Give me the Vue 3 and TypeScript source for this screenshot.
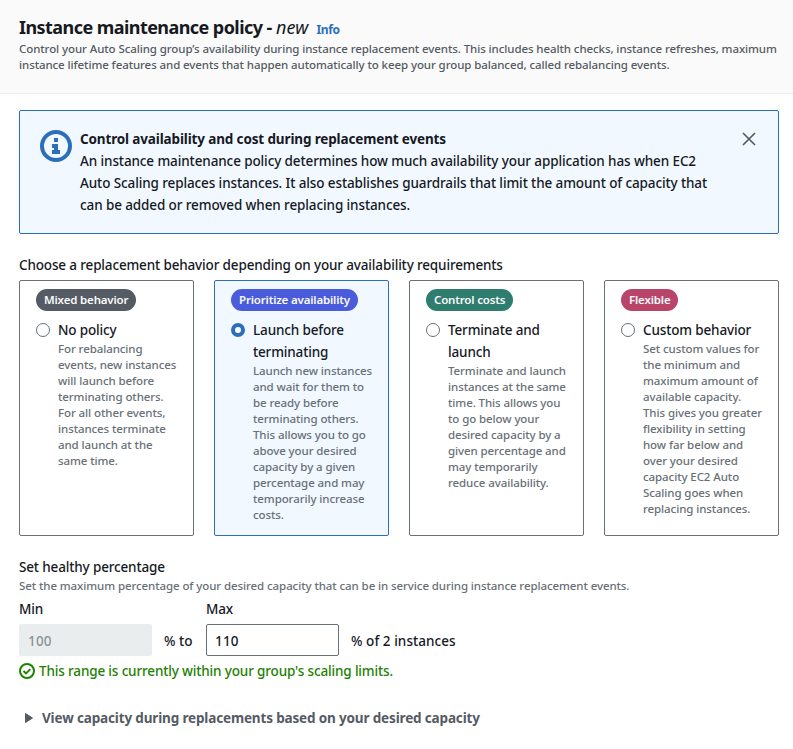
<script setup lang="ts">
import { ref } from 'vue'

interface Option {
  id: string
  badge: string
  tone: string
  label: string[]
  description: string[]
}

const options: Option[] = [
  {
    id: 'none',
    badge: 'Mixed behavior',
    tone: 'grey',
    label: ['No policy'],
    description: ['For rebalancing', 'events, new instances', 'will launch before', 'terminating others.', 'For all other events,', 'instances terminate', 'and launch at the', 'same time.'],
  },
  {
    id: 'launch-first',
    badge: 'Prioritize availability',
    tone: 'blue',
    label: ['Launch before', 'terminating'],
    description: ['Launch new instances', 'and wait for them to', 'be ready before', 'terminating others.', 'This allows you to go', 'above your desired', 'capacity by a given', 'percentage and may', 'temporarily increase', 'costs.'],
  },
  {
    id: 'terminate',
    badge: 'Control costs',
    tone: 'green',
    label: ['Terminate and', 'launch'],
    description: ['Terminate and launch', 'instances at the same', 'time. This allows you', 'to go below your', 'desired capacity by a', 'given percentage and', 'may temporarily', 'reduce availability.'],
  },
  {
    id: 'custom',
    badge: 'Flexible',
    tone: 'red',
    label: ['Custom behavior'],
    description: ['Set custom values for', 'the minimum and', 'maximum amount of', 'available capacity.', 'This gives you greater', 'flexibility in setting', 'how far below and', 'over your desired', 'capacity EC2 Auto', 'Scaling goes when', 'replacing instances.'],
  },
]

const selected = ref<string>('launch-first')
const min = ref<string>('100')
const max = ref<string>('110')
</script>

<template>
  <main class="panel">
    <header class="head">
      <div class="title-row">
        <h2 class="title">Instance maintenance policy - <em>new</em></h2>
        <a class="info">Info</a>
      </div>
      <p class="small head-text">
        <span class="line">Control your Auto Scaling group’s availability during instance replacement events. This includes health checks, instance refreshes, maximum</span>
        <span class="line second">instance lifetime features and events that happen automatically to keep your group balanced, called rebalancing events.</span>
      </p>
    </header>

    <div class="body">
      <section class="alert">
        <svg class="alert-icon" viewBox="0 0 32 32" width="32" height="32">
          <circle cx="16" cy="16" r="14" fill="none" stroke="#2b6fbb" stroke-width="4" />
          <path d="M14 8h4v4h-4zM12 14h6v6h2v4h-8v-4h2v-2h-2z" fill="#2b6fbb" />
        </svg>
        <div class="alert-text">
          <strong class="line alert-title">Control availability and cost during replacement events</strong>
          <span class="line">An instance maintenance policy determines how much availability your application has when EC2</span>
          <span class="line">Auto Scaling replaces instances. It also establishes guardrails that limit the amount of capacity that</span>
          <span class="line">can be added or removed when replacing instances.</span>
        </div>
        <svg class="close" viewBox="0 0 14 14" width="14" height="14">
          <path d="M1 1l12 12M13 1L1 13" fill="none" stroke="#545b64" stroke-width="1.7" />
        </svg>
      </section>

      <div class="group-label">Choose a replacement behavior depending on your availability requirements</div>
      <div class="cards">
        <label v-for="o in options" :key="o.id" class="card" :class="{ active: selected === o.id }" @click="selected = o.id">
          <span class="badge" :class="o.tone">{{ o.badge }}</span>
          <span class="choice">
            <span class="radio"></span>
            <span class="choice-text">
              <span v-for="l in o.label" :key="l" class="line choice-label">{{ l }}</span>
              <span class="small muted">
                <span v-for="d in o.description" :key="d" class="line">{{ d }}</span>
              </span>
            </span>
          </span>
        </label>
      </div>

      <div class="field-title">Set healthy percentage</div>
      <div class="small muted field-help">Set the maximum percentage of your desired capacity that can be in service during instance replacement events.</div>
      <div class="range">
        <div class="field">
          <span>Min</span>
          <input v-model="min" class="input" disabled />
        </div>
        <span class="unit to">% to</span>
        <div class="field">
          <span>Max</span>
          <input v-model="max" class="input" />
        </div>
        <span class="unit">% of 2 instances</span>
      </div>
      <div class="success">
        <svg viewBox="0 0 16 16" width="16" height="16">
          <circle cx="8" cy="8" r="7" fill="none" stroke="#1d8102" stroke-width="2" />
          <path d="M4.5 8l2.5 2.5 4.3-4.3" fill="none" stroke="#1d8102" stroke-width="1.9" />
        </svg>
        <span>This range is currently within your group's scaling limits.</span>
      </div>
      <div class="expander">
        <svg viewBox="0 0 8 10" width="8" height="10"><path d="M.5.5L7.5 5L.5 9.5z" fill="#545b64" stroke="#545b64" stroke-linejoin="round" /></svg>
        <span>View capacity during replacements based on your desired capacity</span>
      </div>
    </div>
  </main>
</template>

<style>
body {
  margin: 0;
  background: #fff;
}
</style>

<style scoped>
.panel {
  width: 793px;
  height: 749px;
  overflow: hidden;
  font: 500 13.5px/22px 'Noto Sans', sans-serif;
  letter-spacing: -0.15px;
  color: #16191f;
}
.panel * {
  box-sizing: border-box;
}
.line {
  display: block;
  white-space: nowrap;
}
.head {
  height: 94px;
  padding: 16px 0 0 19px;
  background: #fafafa;
  border-bottom: 1px solid #eaeded;
}
.title-row {
  display: flex;
  align-items: baseline;
  gap: 8px;
  height: 25px;
}
.title {
  margin: 0;
  font-size: 18px;
  line-height: 22px;
  font-weight: 700;
  letter-spacing: -0.56px;
  white-space: nowrap;
}
.title em {
  font-weight: 400;
  letter-spacing: 0.2px;
}
.info {
  font-size: 12px;
  font-weight: 700;
  color: #2b6fbb;
  letter-spacing: -0.4px;
}
.small {
  font-size: 11.5px;
  line-height: 16px;
  letter-spacing: -0.09px;
}
.head-text {
  margin: 0;
  color: #545b64;
}
.body {
  padding: 16px 14px 0 19px;
}
.alert {
  display: flex;
  height: 124px;
  padding: 17px 22px 17px 20px;
  background: #f1f8ff;
  border: 1px solid #2b6fbb;
  border-radius: 2px;
}
.alert-icon {
  margin-top: 2px;
  flex: none;
}
.alert-text {
  flex: 1;
  min-width: 0;
  margin-left: 8px;
  letter-spacing: -0.11px;
}
.alert-title {
  font-weight: 700;
  letter-spacing: -0.14px;
}
.close {
  flex: none;
  margin-top: 4px;
}
.group-label {
  margin-top: 20px;
}
.cards {
  display: grid;
  grid-template-columns: repeat(4, 175px);
  gap: 20px;
  height: 256px;
  margin-top: 4px;
}
.card {
  padding: 8px 0 0 16px;
  border: 1px solid #687078;
  border-radius: 2px;
}
.card.active {
  background: #f1f8ff;
  border-color: #2b6fbb;
}
.badge {
  display: block;
  width: max-content;
  height: 22px;
  padding: 0 8px;
  border-radius: 11px;
  font-size: 11.5px;
  font-weight: 600;
  letter-spacing: -0.17px;
  color: #fafafa;
}
.grey {
  background: #545b64;
}
.blue {
  background: #4a5cdb;
}
.green {
  background: #2f7d6f;
}
.red {
  background: #b9446a;
}
.choice {
  display: flex;
  gap: 8px;
  margin-top: 8px;
}
.radio {
  flex: none;
  width: 14px;
  height: 14px;
  margin-top: 4px;
  border: 1px solid #687078;
  border-radius: 50%;
  background: #fff;
}
.active .radio {
  border: 4px solid #2b6fbb;
}
.choice-text {
  display: block;
}
.muted {
  color: #687078;
}
.field-title {
  margin-top: 20px;
}
.field-help {
  white-space: nowrap;
}
.range {
  display: flex;
  align-items: flex-end;
  gap: 12px;
  margin-top: 4px;
}
.field {
  display: flex;
  flex-direction: column;
  gap: 4px;
  width: 133px;
}
.input {
  width: 100%;
  height: 32px;
  padding: 3px 8px 1px;
  border: 1px solid #687078;
  border-radius: 2px;
  background: #fff;
  color: #16191f;
  font: inherit;
  letter-spacing: 0.2px;
}
.input:disabled {
  border-color: #eaeded;
  background: #eaeded;
  color: #879596;
}
.unit {
  padding-bottom: 4px;
  letter-spacing: 0.05px;
}
.to {
  width: 30px;
  white-space: nowrap;
}
.success {
  display: flex;
  align-items: center;
  gap: 4px;
  margin-top: 4px;
  color: #1d8102;
}
.expander {
  display: flex;
  align-items: center;
  gap: 9px;
  margin-top: 25px;
  padding-left: 6px;
  font-weight: 700;
  color: #545b64;
}
</style>
